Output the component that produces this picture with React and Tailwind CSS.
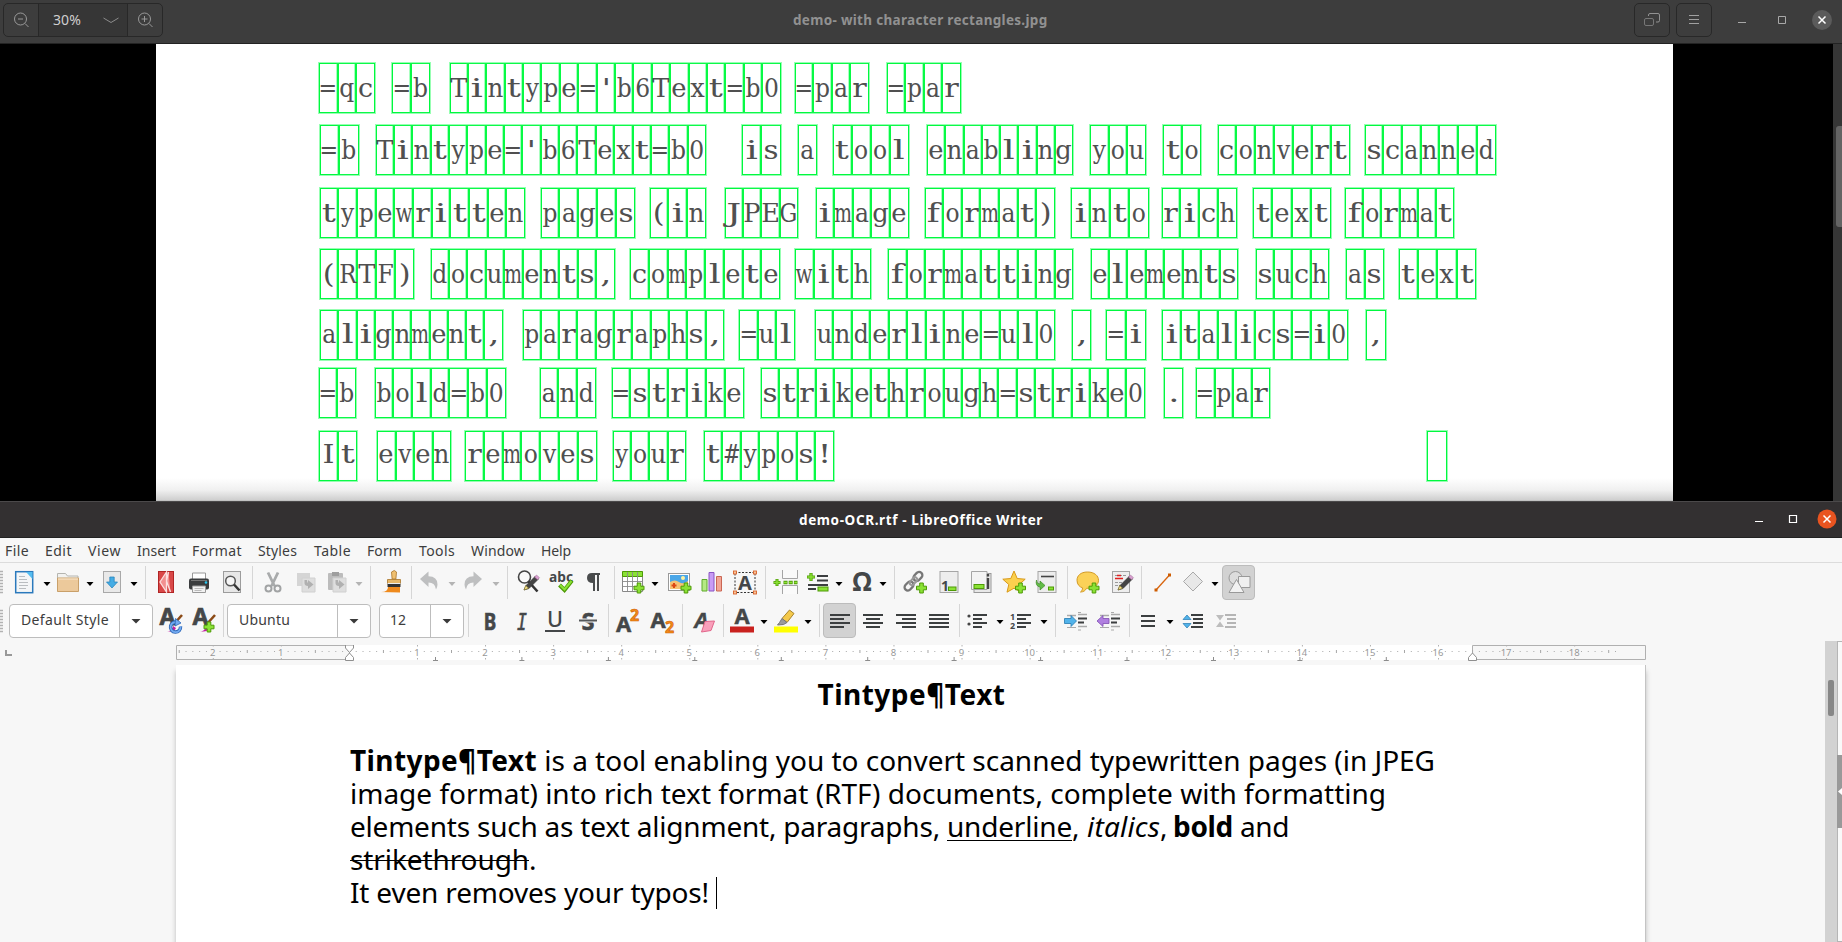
import React, { useLayoutEffect, useRef } from "react";

const UI = "font-['Noto_Sans',sans-serif]";

/* Text run tracked so that it fills a given width. */
function Fit({ w, className = "", children }) {
  const ref = useRef(null);
  useLayoutEffect(() => {
    const el = ref.current;
    el.style.letterSpacing = "0px";
    const natural = el.getBoundingClientRect().width;
    el.style.letterSpacing = `${(w - natural) / el.textContent.length}px`;
  }, [w]);
  return (
    <span ref={ref} className={`inline-block whitespace-pre ${className}`}>
      {children}
    </span>
  );
}

/* Row of items given as [centre, width, node]; gaps come from the data. */
function Bar({ items, className = "" }) {
  let end = 0;
  return (
    <div className={`flex items-center ${className}`}>
      {items.map(([c, w, node], i) => {
        const ml = c - w / 2 - end;
        end = c + w / 2;
        return (
          <div key={i} className="flex shrink-0 items-center justify-center" style={{ marginLeft: ml, width: w }}>
            {node}
          </div>
        );
      })}
    </div>
  );
}

/* ---------- scanned page ---------- */

const ROWS = [
  { y: 63, up: 0, words: [["=qc", 319, 375], ["=b", 392, 430.5], ["Tintype='b6Text=b0", 449.5, 781], ["=par", 795, 869], ["=par", 887, 961]] },
  { y: 125, up: 0, words: [["=b", 319.5, 359], ["Tintype='b6Text=b0", 375.5, 706.5], ["is", 741.5, 781], ["a", 797.5, 817.5], ["tool", 832.5, 909], ["enabling", 927, 1073.5], ["you", 1090, 1146], ["to", 1163, 1201.5], ["convert", 1217.5, 1350], ["scanned", 1364.5, 1496]] },
  { y: 188, up: 0, words: [["typewritten", 319.5, 525.5], ["pages", 540.5, 635.5], ["(in", 649.5, 706.5], ["JPEG", 724.5, 798.5], ["image", 815.5, 909], ["format)", 924.5, 1055.5], ["into", 1070.5, 1149], ["rich", 1161.5, 1237.5], ["text", 1252.5, 1331], ["format", 1345, 1454.5]] },
  { y: 249, up: 0, words: [["(RTF)", 319.5, 414.5], ["documents,", 430.5, 615], ["complete", 630, 780.5], ["with", 795, 871], ["formatting", 888, 1073.5], ["elements", 1090.5, 1238.5], ["such", 1255.5, 1329.5], ["as", 1345.5, 1384], ["text", 1398.5, 1476.5]] },
  { y: 310, up: 1, words: [["alignment,", 320, 503], ["paragraphs,", 522.5, 724.5], ["=ul", 739, 795.5], ["underline=ul0", 815, 1055.5], [",", 1071.5, 1091.5], ["=i", 1106, 1146], ["italics=i0", 1162, 1348.5], [",", 1365.5, 1386]] },
  { y: 368, up: 0, words: [["=b", 318.5, 356.5], ["bold=b0", 374.5, 506], ["and", 539.5, 596], ["=strike", 611.5, 744], ["strikethrough=strike0", 761, 1145], [".", 1163.5, 1183.5], ["=par", 1196, 1270.5]] },
  { y: 431, up: 2, words: [["It", 319, 357.5], ["even", 377, 451.5], ["removes", 465, 597], ["your", 612.5, 686.5], ["t#ypos!", 703.5, 834.5], [" ", 1426.5, 1447.5]] },
];

const SQUEEZE = { m: 0.8, w: 0.85, "=": 0.95, G: 0.95, "#": 0.9, T: 1.1, R: 0.98, P: 1.1, E: 1.1, J: 1.6, I: 1.3, i: 1.65, l: 1.6, t: 1.5, r: 1.3, c: 1.15, s: 1.25, e: 1.1, f: 1.5, "'": 1.5, ".": 1.5, ",": 1.5, "!": 1.4, x: 1.1, g: 1.1, h: 1.05, k: 1.05, n: 1.05, u: 1.05, "(": 1.3, ")": 1.3 };

function Word({ text, x, w, y, up }) {
  return (
    <div
      className="absolute box-border flex h-[50px] border border-[#00f83f] shadow-[0_0_0_1px_#3cff6f88]"
      style={{ left: x, top: y, width: w - 0.5 }}
    >
      {[...text].map((ch, i) => (
        <div
          key={i}
          className={`flex min-w-0 flex-1 justify-center ${i ? "border-l-2 border-[#08fa45] shadow-[-0.5px_0_0_0.5px_#3cff6f70]" : ""}`}
        >
          <span
            className="inline-block whitespace-pre font-['DejaVu_Serif_Condensed','DejaVu_Serif',serif] text-[26px] leading-[48px] font-normal text-[#505050] [font-stretch:condensed]"
            style={{ transform: `translateY(${-up}px) scaleX(${SQUEEZE[ch] || 1})` }}
          >
            {ch}
          </span>
        </div>
      ))}
    </div>
  );
}

function Viewer() {
  return (
    <section className="flex h-[501px] shrink-0 flex-col bg-black">
      <header className="relative flex h-[44px] shrink-0 items-start border-b border-[#232323] bg-[#3d3d3d] pt-[3px]">
        <div className="ml-[3px] flex h-[34px] w-[160px] overflow-hidden rounded-[5px] border border-[#282828]">
          <div className="flex w-[35px] items-center justify-center border-r border-[#282828]">
            <Zoom />
          </div>
          <div className="flex w-[89px] items-center justify-between border-r border-[#282828] bg-[#363636] pr-[8px] pl-[14px]">
            <Fit w={28} className={`${UI} -mt-px text-[14px] text-[#cfcfcf]`}>30%</Fit>
            <svg className="h-3 w-4" viewBox="0 0 16 12" fill="none" stroke="#8c8c8c"><path d="M.5 4 8 8.500 15.500 4" /></svg>
          </div>
          <div className="flex flex-1 items-center justify-center">
            <Zoom plus />
          </div>
        </div>
        <div className="ml-[630px] w-[255px] pt-[4px]">
          <Fit w={254.500} className={`${UI} text-[13.5px] leading-[22px] font-bold text-[#919191]`}>demo- with character rectangles.jpg</Fit>
        </div>
        <div className="ml-auto flex items-start">
          <div className="flex h-[34px] w-[36px] items-center justify-center rounded-[5px] border border-[#282828]">
            <svg className="h-4 w-4" viewBox="0 0 16 16" fill="none" stroke="#929292">
              <path d="M4.500 4V3Q4.500 1.500 6 1.500h8Q15.500 1.500 15.500 3v5.500Q15.500 10 14 10h-2" />
              <rect x=".5" y="6.500" width="9" height="7" rx="1.500" stroke="#777" />
            </svg>
          </div>
          <div className="ml-[6px] flex h-[34px] w-[36px] items-center justify-center rounded-[5px] border border-[#282828]">
            <svg className="h-4 w-4" viewBox="0 0 16 16" stroke="#a0a0a0"><path d="M3 3.500h10M3 7.500h10M3 11.500h10" /></svg>
          </div>
          <svg className="ml-[26px] h-[34px] w-[104px]" viewBox="0 0 104 34" fill="none" stroke="#a8a8a8">
            <path d="M0 19.500h8M40.500 13.500h7v7h-7z" />
            <circle cx="84" cy="17" r="10" fill="#5b5b5b" stroke="none" />
            <path d="m80.500 13.500 7 7m0-7-7 7" stroke="#fff" strokeWidth="1.500" />
          </svg>
        </div>
      </header>
      <div className="flex min-h-0 flex-1">
        <div className="ml-[156px] w-[1517px] bg-[linear-gradient(to_bottom,#fff_0,#fff_434px,#f0f0f0_446px,#cfcfcf_456px,#b5b5b5_457px)]" />
        <div className="ml-auto w-[9px] bg-[#363636] pt-[82px] pl-[3px]">
          <div className="h-[101px] w-[6px] rounded-l-[3px] bg-[#646464]" />
        </div>
      </div>
    </section>
  );
}

function Zoom({ plus }) {
  return (
    <svg className="h-4 w-4" viewBox="0 0 16 16" fill="none" stroke="#999">
      <circle cx="7.500" cy="7" r="6" />
      <path d={plus ? "M4.500 7h6M7.500 4v6M12 11.500l3.500 3.500" : "M5 7h5M12 11.500l3.500 3.500"} />
    </svg>
  );
}

/* ---------- toolbar icons ---------- */

const S = ({ children, className = "h-6 w-6" }) => (
  <svg className={`${className} overflow-visible`} viewBox="0 0 24 24" fill="none">{children}</svg>
);
const Plus = ({ x = 17.500, y = 17.500 }) => (
  <path transform={`translate(${x} ${y})`} d="M-1.800-5h3.600v3.200H5v3.600H1.800V5h-3.600V1.800H-5v-3.600h3.200z" fill="#8ae234" stroke="#4e9a06" />
);
const Drop = ({ dim }) => (
  <svg className="mt-[3px] h-[6px] w-[8px]" viewBox="0 0 8 6"><path d="M.5 1h7L4 5z" fill={dim ? "#b4b4b4" : "#000"} /></svg>
);
const Sep = () => <div className="h-[33px] w-px bg-[#d6d6d6]" />;
const Letter = ({ children, x = 12, y = 20, size = 22, fill = "#444749", weight = 700, ...p }) => (
  <text x={x} y={y} fontSize={size} fill={fill} fontWeight={weight} textAnchor="middle" fontFamily="'Noto Sans', sans-serif" {...p}>{children}</text>
);
const Grip = () => (
  <svg className="h-[24px] w-[4px]" viewBox="0 0 4 24"><path d="M0 1.500h3M0 4.500h3M0 7.500h3M0 10.500h3M0 13.500h3M0 16.500h3M0 19.500h3M0 22.500h3" stroke="#b2b2b2" strokeWidth="1.500" /></svg>
);
const Pencil = () => (
  <g><path d="m8 20 2-4.500L19.500 6l3 3L13 18.500z" fill="#444" stroke="#333" strokeWidth=".6" /><path d="m8 20 1.700-4.500 3 2.800z" fill="#f4e08a" stroke="#776a20" strokeWidth=".6" /><path d="m18.500 7 2-2 3 2.700-2 2z" fill="#d9a0d0" stroke="#96608d" strokeWidth=".5" /></g>
);
const Lines = ({ d }) => <path d={d} stroke="#3c3f40" strokeWidth="2" />;

const New = () => (
  <S><rect x="3.700" y="1.700" width="17" height="21" fill="#f4f6f7" stroke="#2a79bc" strokeWidth="1.500" /><path d="M14 2h6.500v7z" fill="#55bdf0" /><path d="M7 6.500h6M7 9.500h8M7 12.500h9M7 15.500h9M7 18.500h7" stroke="#b9bdc0" /></S>
);
const Folder = () => (
  <S><path d="M1.500 21V3.500h8l2 2.500H22v15z" fill="#f2f2f0" stroke="#b5b5b0" /><path d="M1.500 8h21v13.500h-21z" fill="#ecc99b" stroke="#c9a06a" /><path d="M2 9h20" stroke="#f9e8cf" /></S>
);
const Save = () => (
  <S><rect x="3.500" y="1.500" width="17" height="21" fill="#e9e9e9" stroke="#a9a9a9" /><path d="M9.800 7h4.400v5h3.300L12 18l-5.500-6h3.300z" fill="#45ace4" stroke="#1f7fb8" strokeWidth=".7" /></S>
);
const Pdf = () => (
  <S><rect x="4.500" y="1.500" width="15" height="21" fill="#d94848" stroke="#b02525" /><path d="M12.500 2 6 12l6.500 10zM14.500 2l-2 9 4 11" fill="#f29090" stroke="#fbe0e0" strokeWidth="1.300" /></S>
);
const Printer = () => (
  <S><path d="M5.500 3h13v7h-13z" fill="#fff" stroke="#999" /><rect x="2" y="8.500" width="20" height="11" rx="2" fill="#3b3d3e" /><path d="M4 10.500h16" stroke="#777" /><circle cx="19" cy="12.500" r="1.300" fill="#28c7f0" /><path d="M5.500 16h13v6.500h-13z" fill="#f2f2f2" stroke="#999" /><path d="M7.500 18.500h9M7.500 20.500h7" stroke="#bbb" /></S>
);
const Preview = () => (
  <S><rect x="3.500" y="1.500" width="17" height="21" fill="#e7e7e7" stroke="#9c9c9c" /><circle cx="10.500" cy="11" r="4.800" fill="#f5f5f5" stroke="#555" strokeWidth="1.500" /><path d="m14 14.500 5.500 6" stroke="#333" strokeWidth="2.500" /></S>
);
const Cut = () => (
  <S><path d="M7 2.500 13.500 16M17 2.500 10.500 16" stroke="#a9abac" strokeWidth="2.800" /><ellipse cx="7.500" cy="18.500" rx="3" ry="3" stroke="#a1a3a4" strokeWidth="2" /><ellipse cx="16.500" cy="18.500" rx="3" ry="3" stroke="#a1a3a4" strokeWidth="2" /></S>
);
const ArrowSoft = () => <path d="M10.500 10v3q0 3 3.500 3v3l5.500-4.500L14 10v3q-1 0-1-3z" fill="#b0b0b0" />;
const Copy = () => (
  <S><path d="M3 3h13v13H3z" fill="#d5d5d5" /><path d="M8 8h13v14H8z" fill="#dedede" stroke="#d0d0d0" /><ArrowSoft /></S>
);
const Paste = () => (
  <S><rect x="3" y="3" width="15" height="17" rx="1" fill="#bcbcbc" /><path d="M7 2h7v4H7z" fill="#9e9e9e" /><path d="M8 8h13v14H8z" fill="#dedede" stroke="#d0d0d0" /><ArrowSoft /></S>
);
const Brush = () => (
  <S><path d="M1 22q8 .5 8-5h12v5.500z" fill="#ef8a1d" /><path d="M12.500 2q3-3 5 0l-.6 7h-3.800z" fill="#f0c070" stroke="#a8752a" strokeWidth=".8" /><path d="M8.500 9.500h13V14h-13z" fill="#e8b868" stroke="#a8752a" strokeWidth=".8" /><path d="M8.500 13.500h13V17h-13z" fill="#333" /><path d="M8.500 13.500h13" stroke="#eee" /></S>
);
const Undo = ({ flip }) => (
  <S><path transform={flip ? "translate(24 0) scale(-1 1)" : undefined} d="m3 9 8.500-7.500v4.800q9 .2 9 8.200 0 2-1.500 5-.8-7-7.500-7V17z" fill="#bebfc0" /></S>
);
const Find = () => (
  <S><circle cx="8.500" cy="7" r="6" fill="#fafafa" stroke="#444" strokeWidth="1.600" /><path d="m12.500 11.500 9 10" stroke="#333" strokeWidth="2.600" /><Pencil /></S>
);
const Abc = () => (
  <S><Letter y={11.500} size={14} textLength="24" lengthAdjust="spacingAndGlyphs">abc</Letter><path d="m10.500 15 5 5L23 10.500" stroke="#4e9a06" strokeWidth="4" /><path d="m11 15 4.500 4.500L22.500 11" stroke="#8ae234" strokeWidth="2" /></S>
);
const Pilcrow = () => (
  <S><path d="M18 3H10Q5 3 5 8t6 5v8h2V5h2v16h2V5h1z" fill="#4a4c4d" /></S>
);
const Table = () => (
  <S><path d="M1.500 2h20v19.500h-20z" fill="#fff" stroke="#888" /><path d="M1.500 1.500h20v5h-20z" fill="#8ae234" stroke="#4e9a06" /><path d="M6.500 2v19M11.500 2v19M16.500 2v19M2 11.500h19M2 16.500h19" stroke="#8b8b8b" strokeWidth=".9" /><Plus x={18} y={18} /></S>
);
const Picture = () => (
  <S><rect x="1.500" y="3.500" width="21" height="17" fill="#fff" stroke="#999" /><path d="M3 5h18v9H3z" fill="#4ba7e8" /><path d="M3 12q5-3 9 0t9-1v8H3z" fill="#f6c274" /><path d="M7 13v5M4.500 15.500h5" stroke="#dd4814" strokeWidth="2" /><circle cx="16" cy="8" r="2" fill="#fff3a0" /><Plus x={19} y={18} /></S>
);
const Chart = () => (
  <S><path d="M2 9.500h5V21H2z" fill="#b5ea84" stroke="#5faa2b" /><path d="M9 2.500h5V21H9z" fill="#c89cf5" stroke="#8a55c4" /><path d="M16.500 6.500h5V21h-5z" fill="#f2a596" stroke="#ca6653" /></S>
);
const TextBox = () => (
  <S><rect x="2" y="2.500" width="20" height="20" stroke="#333" strokeDasharray="2 1.500" /><Letter y={19.500} size={20}>A</Letter>{[[2, 2.500], [22, 2.500], [2, 22.500], [22, 22.500]].map(([x, y], i) => <rect key={i} x={x - 1.500} y={y - 1.500} width="3" height="3" fill="#f9c49a" stroke="#d8632c" strokeWidth=".9" />)}</S>
);
const Break = () => (
  <S><path d="M8.500 0v8.500h15V0M8.500 24v-8.500h15V24" fill="#fafafa" stroke="#a5a5a5" /><path d="M9.500 12.500h14" stroke="#4e9a06" strokeWidth="3.400" strokeDasharray="4 1.200" /><path d="M10 12.500h13" stroke="#8ae234" strokeWidth="1.500" strokeDasharray="3 2.200" /><path d="M3 9v7M-.5 12.500h7" stroke="#4e9a06" strokeWidth="3" /><path d="M3 9.500v6M0 12.500h6" stroke="#8ae234" strokeWidth="1.400" /></S>
);
const Field = () => (
  <S><Lines d="M11 6h11M11 10.500h11M2 15h20M2 19h8" /><path d="M5 3v8M1 7h8" stroke="#4e9a06" strokeWidth="3.200" /><path d="M5 3.500v7M1.500 7h7" stroke="#8ae234" strokeWidth="1.500" /><rect x="12" y="17" width="10" height="4" fill="#8ae234" stroke="#4e9a06" /></S>
);
const Omega = () => <S><Letter y={21} size={26}>Ω</Letter></S>;
const Link = () => (
  <S><g transform="rotate(-47 11 11)" fill="none"><rect x="-1" y="7.500" width="10" height="6.500" rx="3.200" stroke="#777" strokeWidth="2.300" /><rect x="12" y="7.500" width="10" height="6.500" rx="3.200" stroke="#777" strokeWidth="2.300" /><rect x="6" y="8.500" width="9" height="4.500" rx="2.200" stroke="#999" strokeWidth="2" /></g><Plus x={18.500} y={18} /></S>
);
const Sheet = () => <rect x="3" y="1.500" width="18" height="21" fill="#ededed" stroke="#a5a5a5" />;
const Footnote = () => (
  <S><Sheet /><Letter x={8} y={20.500} size={14}>1</Letter><rect x="11.500" y="17" width="7.500" height="3.500" fill="#8ae234" stroke="#4e9a06" /></S>
);
const Endnote = () => (
  <S><rect x="5" y="3.500" width="17" height="19" fill="#e8e8e8" stroke="#999" /><path d="M2.500 1.500H18v18H2.500z" fill="#f3f3f3" stroke="#a5a5a5" /><path d="M19 8v11M19 4v2.500" stroke="#444" strokeWidth="2.400" /><rect x="5" y="14.500" width="10" height="4" fill="#8ae234" stroke="#4e9a06" /></S>
);
const Star = () => (
  <S><path d="m12 1 3.200 7.500 8 .7-6 5.300 1.800 7.700-7-4-7 4 1.800-7.700-6-5.300 8-.7z" fill="#fbd04e" stroke="#d99a1a" /><Plus x={18.500} y={18} /></S>
);
const CrossRef = () => (
  <S><Sheet /><path d="M6 6.500h13" stroke="#444" strokeWidth="1.600" /><path d="M1.500 10q0 4 3.500 4v-3l5 4.500-5 4.500v-3q-5-1-3.500-7z" fill="#62bd46" stroke="#3d8a26" strokeWidth=".7" /><rect x="13.500" y="17" width="5" height="3" fill="#8ae234" stroke="#4e9a06" /></S>
);
const Comment = () => (
  <S><path d="M11.500 2C4.500 2 1 5.800 1 10.300c0 4 2.500 6.700 5.500 7.500 0 2-.5 3-2 4.200 3 0 5-1.500 6-3.700 8 .2 12-3.500 12-8S18.500 2 11.500 2z" fill="#fbd158" stroke="#d39a24" /><Plus x={18} y={18} /></S>
);
const Track = () => (
  <S><rect x="2.500" y="1.500" width="17" height="21" fill="#eee" stroke="#a5a5a5" /><path d="M5 5.500h12M5 12.500h8M5 15.500h6" stroke="#999" strokeDasharray="3 1" /><path d="M5 8.500h8M7 5.500h4" stroke="#e02020" strokeWidth="1.600" /><Pencil /></S>
);
const Line = () => (
  <S><path d="m5 20 13.500-15" stroke="#d8650f" strokeWidth="1.300" /><path d="M3.500 18.500h3v3h-3zM17 3.500h3v3h-3z" fill="#ce5c00" /></S>
);
const Diamond = () => <S><path d="m12 2 9.500 9.500L12 21l-9.500-9.500z" fill="#e8e8e8" stroke="#a9a9a9" /></S>;
const Shapes = () => (
  <div className="flex h-[35px] w-[33px] items-center justify-center rounded-[4px] border border-[#bcbcbc] bg-[#d2d2d2]">
    <S><circle cx="8.500" cy="8" r="6.500" fill="#ddd" stroke="#999" /><path d="M11.500 6.500H23v11H11.500z" fill="#efefef" stroke="#999" /><path d="m9.500 9.500 7.500 13H2z" fill="#f2f2f2" stroke="#999" /></S>
  </div>
);

const StyleA = ({ add }) => (
  <S><path d="m14 16 9-10" stroke="#8b4a16" strokeWidth="2.600" /><path d="M8 22q5 1 6-5l3 2q-2 5-9 3z" fill="#c020a0" /><Letter x={8.500} y={16} size={23} stroke="#444749" strokeWidth=".7">A</Letter>
    {add ? <Plus x={17} y={18} /> : <g><path d="M21.500 17.500a5 5 0 1 1-3-4" stroke="#2c66b8" strokeWidth="3.500" /><path d="M21.500 17.500a5 5 0 1 1-3-4" stroke="#72aaf0" strokeWidth="1.800" /><path d="M16.500 9.500 22 14l-6 3z" fill="#72aaf0" stroke="#2c66b8" strokeWidth=".8" /></g>}
  </S>
);
const Bold = () => <S><Letter y={20.500} size={23} stroke="#444749" strokeWidth=".6" textLength="12.500" lengthAdjust="spacingAndGlyphs">B</Letter></S>;
const Italic = () => <S><Letter y={20.500} size={23} weight={400} stroke="#444749" strokeWidth=".6" fontFamily="'DejaVu Sans Mono', monospace" fontStyle="italic" textLength="10" lengthAdjust="spacingAndGlyphs">I</Letter></S>;
const Under = () => <S><Letter y={18} size={21} weight={500} textLength="16" lengthAdjust="spacingAndGlyphs">U</Letter><path d="M2 22h20" stroke="#444749" strokeWidth="2" /></S>;
const Strike = () => <S><Letter y={20.500} size={23} stroke="#444749" strokeWidth=".5" textLength="13" lengthAdjust="spacingAndGlyphs">S</Letter><path d="M3 11.500h18" stroke="#f7f7f7" strokeWidth="4" /><path d="M3 11.500h18" stroke="#55585a" strokeWidth="2" /></S>;
const Sup = () => <S><Letter x={7.500} y={23} size={22} stroke="#444749" strokeWidth=".5">A</Letter><Letter x={18.500} y={12} size={16} fill="#f38b1a" stroke="#ce5c00" strokeWidth=".6">2</Letter></S>;
const Sub = () => <S><Letter x={8} y={18.500} size={22} stroke="#444749" strokeWidth=".5">A</Letter><Letter x={19.500} y={23.500} size={16} fill="#f38b1a" stroke="#ce5c00" strokeWidth=".6">2</Letter></S>;
const Clear = () => <S><Letter x={9.500} y={18.500} size={22} fontStyle="italic" stroke="#444749" strokeWidth=".4">A</Letter><path d="m13 12.500 9.500-.5-3.500 9.500-9.500 1.500z" fill="#f9a0bb" stroke="#e2668b" /></S>;
const FontColor = () => <S><Letter y={14.500} size={22} stroke="#444749" strokeWidth=".4">A</Letter><path d="M0 17.500h24v6H0z" fill="#c9211e" /></S>;
const Mark = () => <S><path d="m8 9.500 7.500-8.500L20 4.500l-7 9z" fill="#f4c94c" stroke="#a8842b" /><path d="m8 9.500-2.500 4-2 2.500 6-.5 3.500-2z" fill="#9b9b9b" stroke="#777" /><path d="M0 17.500h24v6H0z" fill="#ffff00" /></S>;

const Left = () => <div className="flex h-[35px] w-[33px] items-center justify-center rounded-[4px] border border-[#bcbcbc] bg-[#d2d2d2]"><S><Lines d="M2 6h20M2 10h14M2 14h20M2 18h14" /></S></div>;
const Center = () => <S><Lines d="M2 6h20M5 10h14M2 14h20M5 18h14" /></S>;
const Right = () => <S><Lines d="M2 6h20M8 10h14M2 14h20M8 18h14" /></S>;
const Justify = () => <S><Lines d="M2 6h20M2 10h20M2 14h20M2 18h20" /></S>;
const Bullets = () => <S><Lines d="M8 6h14M8 10h9M8 14h14M8 18h9" /><circle cx="4" cy="7" r="1.600" fill="#444" /><circle cx="4" cy="15" r="1.600" fill="#444" /></S>;
const Numbers = () => <S><Lines d="M8 6h14M8 10h9M8 14h14M8 18h9" /><Letter x={3.500} y={10.500} size={9}>1</Letter><Letter x={3.500} y={19.500} size={9}>2</Letter></S>;
const Indent = ({ out }) => (
  <S><path d="M14 3.500h3M14 21h3M3 18.500h9" stroke="#aaa" /><path d="M14 5.500h9M14 17.500h9M3 6.500h9" stroke="#aaa" strokeWidth="1.500" /><Lines d="M14 9.500h9M14 13.500h6" />
    {out ? <path d="M0 12 6 6.500v3h6v5H6v3z" fill="#b07fe0" stroke="#7d4db0" strokeWidth=".8" /> : <path d="M12.500 12 7 6.500v3H.5v5H7v3z" fill="#52b3ea" stroke="#2479b0" strokeWidth=".8" />}
  </S>
);
const Spacing = () => <S><Lines d="M5 7h14M5 12h14M5 17h14" /></S>;
const More = () => <S><Lines d="M10 6h12M12 10h10M12 14h10M10 18h12" /><path d="M2 10.500 6 6l4 4.500zM2 14.500 6 19l4-4.500z" fill="#52b3ea" stroke="#2479b0" strokeWidth=".7" /></S>;
const Less = () => <S><path d="M11 6h11M13 10h9M13 14h9M11 18h11" stroke="#b5b5b5" strokeWidth="2" /><path d="M2 6h8l-4 5.500zM2 18h8l-4-5.500z" fill="#bdbdbd" /></S>;

const sep = (x) => [x, 1, <Sep />];
const drop = (x, dim) => [x - 0.5, 8, <Drop dim={dim} />];
const ic = (x, node) => [x, 24, node];

const BAR1 = [
  [2, 4, <Grip />], ic(24, <New />), drop(47), ic(68, <Folder />), drop(90.500), ic(112, <Save />), drop(134.500), sep(145.500),
  ic(166, <Pdf />), ic(199, <Printer />), ic(232, <Preview />), sep(252.500), ic(273, <Cut />), ic(306, <Copy />), ic(337, <Paste />), drop(359.500, true),
  sep(370.500), ic(391, <Brush />), sep(411.500), ic(429, <Undo />), drop(452.500, true), ic(473, <Undo flip />), drop(496.500, true), sep(507.500),
  ic(528, <Find />), ic(561, <Abc />), ic(594, <Pilcrow />), sep(614.500), ic(633, <Table />), drop(655.500), ic(679, <Picture />), ic(712, <Chart />),
  ic(745, <TextBox />), sep(765.500), ic(786, <Break />), ic(818, <Field />), drop(839.500), ic(861.500, <Omega />), drop(883.500), sep(894.500),
  ic(915, <Link />), ic(948.500, <Footnote />), ic(981, <Endnote />), ic(1014, <Star />), ic(1047, <CrossRef />), sep(1067.500), ic(1088, <Comment />),
  ic(1122, <Track />), sep(1141.500), ic(1163, <Line />), ic(1193, <Diamond />), drop(1215.500), [1238.500, 33, <Shapes />],
];

function Combo({ text, w, tw, box, pad }) {
  return (
    <div className="flex h-[34px] shrink-0 overflow-hidden rounded-[4px] border border-[#bdbdbd] bg-white" style={{ width: w }}>
      <div className="flex flex-1 items-center" style={{ paddingLeft: pad }}>
        <Fit w={tw} className={`${UI} -mt-[2px] text-[14px] text-[#3d3d3d]`}>{text}</Fit>
      </div>
      <div className="flex items-center justify-center border-l border-[#bdbdbd]" style={{ width: box }}>
        <svg className="h-[6px] w-[10px]" viewBox="0 0 10 6"><path d="M.5 1h9L5 5.500z" fill="#3a3a3a" /></svg>
      </div>
    </div>
  );
}

const BAR2 = [
  [2, 4, <Grip />], [81, 144, <Combo text="Default Style" w={144} tw={88} box={33} pad={11} />], ic(170.500, <StyleA />), ic(203.500, <StyleA add />), sep(223.500),
  [299, 144, <Combo text="Ubuntu" w={144} tw={51} box={33} pad={11} />], [421.500, 85, <Combo text="12" w={85} tw={16} box={33} pad={10} />], sep(468.500),
  ic(489.500, <Bold />), ic(522, <Italic />), ic(555, <Under />), ic(588, <Strike />), sep(608.500), ic(628, <Sup />), ic(661.500, <Sub />), sep(682.500),
  ic(704, <Clear />), sep(723.500), ic(742, <FontColor />), drop(764.500), ic(786, <Mark />), drop(808.500), sep(819.500), [839.500, 33, <Left />],
  ic(873, <Center />), ic(906, <Right />), ic(939, <Justify />), sep(959.500), ic(977, <Bullets />), drop(1000.500), ic(1021, <Numbers />), drop(1044.500),
  sep(1055.500), ic(1076, <Indent />), ic(1109, <Indent out />), sep(1129.500), ic(1148, <Spacing />), drop(1170.500), ic(1193, <More />), ic(1226, <Less />),
];

const MENU = [["File", 5, 24], ["Edit", 45, 27], ["View", 88, 33], ["Insert", 137, 39], ["Format", 192, 50], ["Styles", 258, 39], ["Table", 314, 37], ["Form", 367, 35], ["Tools", 419, 36], ["Window", 471, 54], ["Help", 541, 30]];

function Ruler() {
  const X0 = 173.400, U = 68.07;
  const marks = [];
  for (let i = -25; i <= 186; i++) {
    const x = X0 + (i * U) / 10;
    if (i % 10 === 0) {
      if (i === 0) continue;
      marks.push(<text key={i} x={x - 0.5} y="10.500" fontSize="9.500" textAnchor="middle" fill="#989898" fontFamily="'Noto Sans', sans-serif">{Math.abs(i / 10)}</text>);
      marks.push(<path key={`t${i}`} d={`M${x} 0v1.500M${x} 13v1.500`} stroke="#b0b0b0" />);
    } else if (i % 5 === 0) marks.push(<path key={i} d={`M${x} 5v3`} stroke="#a6a6a6" />);
    else marks.push(<rect key={i} x={x - 0.500} y="6" width="1" height="1" fill="#aaa" />);
  }
  return (
    <svg className="h-[17px] w-[1470px] shrink-0" viewBox="0 0 1470 17">
      <path d="M0 0h1470v15H0z" fill="#fff" />
      <path d="M.5.500h173v14H.5zM1296.500.500h173v14h-173z" fill="#f7f7f7" stroke="#b0b0b0" />
      {marks}
      {Array.from({ length: 12 }, (_, i) => <path key={i} d={`M${(259.500 + i * 86.440).toFixed(1)} 12v3.500m-2.500 0h5`} stroke="#8c8c8c" fill="none" />)}
      <path d="M169.500 0h8v3l-4 4.500-4-4.500zM169.500 15.500h8v-3l-4-4.500-4 4.500zM1292.500 15.500h8v-3l-4-4.500-4 4.500z" fill="#fff" stroke="#8f8f8f" />
    </svg>
  );
}

function Document() {
  return (
    <div className="flex min-h-0 w-[1470px] flex-1 flex-col border-r border-[#c4c4c4] bg-white pt-[13px] pl-[174px] font-['Noto_Sans',sans-serif] text-[28px] leading-[33px] text-black shadow-[0_6px_5px_#bbb]">
      <div className="pl-[467.500px] font-bold"><Fit w={188}>Tintype¶Text</Fit></div>
      <div className="mt-[33px] flex">
        <Fit w={187} className="font-bold">Tintype¶Text</Fit>
        <Fit w={898}> is a tool enabling you to convert scanned typewritten pages (in JPEG</Fit>
      </div>
      <div className="flex"><Fit w={1036}>image format) into rich text format (RTF) documents, complete with formatting</Fit></div>
      <div className="flex">
        <Fit w={597}>elements such as text alignment, paragraphs, </Fit>
        <Fit w={125} className="underline decoration-1 underline-offset-[3px]">underline</Fit>
        <Fit w={15}>, </Fit>
        <Fit w={73} className="italic">italics</Fit>
        <Fit w={13}>, </Fit>
        <Fit w={60} className="font-bold">bold</Fit>
        <Fit w={56}> and</Fit>
      </div>
      <div className="flex"><Fit w={179} className="line-through decoration-1">strikethrough</Fit><span>.</span></div>
      <div className="flex items-center"><Fit w={366}>It even removes your typos! </Fit><span className="h-[32px] w-px bg-black" /></div>
    </div>
  );
}

function Writer() {
  return (
    <section className="flex min-h-0 flex-1 flex-col bg-[#f7f7f7]">
      <header className="flex h-[37px] shrink-0 items-center border-t border-b border-t-[#4b494a] border-b-[#222] bg-[#333031]">
        <div className="-mt-px ml-[799px]"><Fit w={244} className={`${UI} text-[13.5px] leading-[22px] font-bold text-white`}>demo-OCR.rtf - LibreOffice Writer</Fit></div>
        <svg className="ml-auto h-[35px] w-[88px]" viewBox="0 0 88 35" fill="none" stroke="#fff">
          <path d="M1 19.500h8" /><path d="M35.500 13.500h7v7h-7z" strokeWidth="1.200" />
          <circle cx="73" cy="17" r="9.500" fill="#e95420" stroke="none" /><path d="m69.500 13.500 7 7m0-7-7 7" strokeWidth="1.500" />
        </svg>
      </header>
      <Bar className="h-[25px] shrink-0 border-b border-[#dcdcdc] pt-[2px]" items={MENU.map(([t, x, w]) => [x + w / 2, w, <Fit w={w} className={`${UI} text-[14px] leading-[22px] text-[#3d3d3d]`}>{t}</Fit>])} />
      <Bar className="h-[38px] shrink-0" items={BAR1} />
      <Bar className="h-[39px] shrink-0" items={BAR2} />
      <div className="flex min-h-0 flex-1">
        <div className="flex w-[176px] shrink-0 items-start pt-[10px] pl-[5px]">
          <div className="h-[6px] w-[7px] border-b-2 border-l-2 border-[#999]" />
        </div>
        <div className="flex w-[1470px] shrink-0 flex-col gap-[3px] overflow-visible pt-[5px]">
          <Ruler />
          <Document />
        </div>
        <div className="mt-px ml-auto flex">
          <div className="w-[12px] bg-[#d2d2d2] pt-[39px] pl-[3px]"><div className="h-[36px] w-[6px] rounded-[2px] bg-[#878787]" /></div>
          <div className="w-[5px] border-y border-l border-[#b5b5b5] bg-[#f9f9f9] pt-[113px]">
            <svg className="-ml-px h-[73px] w-[5px]" viewBox="0 0 5 73"><path d="M0 0h5v73H0z" fill="#999" /><path d="M1 36.500 5 33v7z" fill="#fff" /></svg>
          </div>
        </div>
      </div>
    </section>
  );
}

export default function App() {
  return (
    <main className="relative flex h-[942px] w-[1842px] flex-col overflow-hidden">
      <Viewer />
      <div className="absolute top-0 left-0">
        {ROWS.map((r) => r.words.map(([t, a, b]) => <Word key={`${r.y}-${a}`} text={t} x={a} w={b - a} y={r.y} up={r.up} />))}
      </div>
      <Writer />
    </main>
  );
}
